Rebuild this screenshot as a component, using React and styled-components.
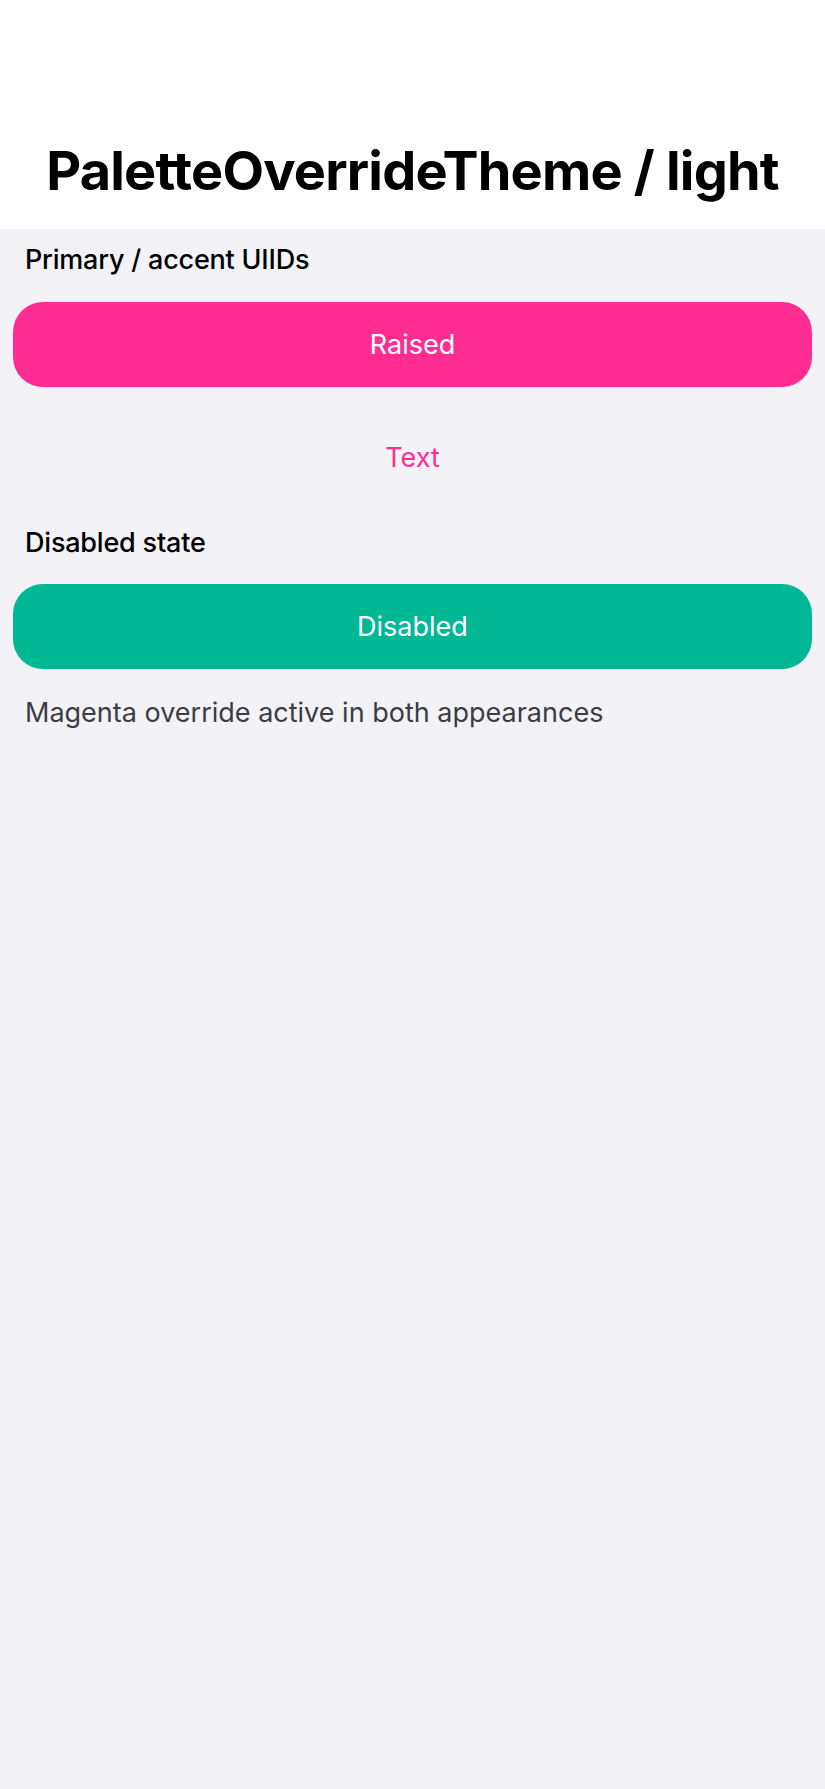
import React from "react";
import styled, { createGlobalStyle } from "styled-components";

const GlobalStyle = createGlobalStyle`
  html, body {
    margin: 0;
    padding: 0;
    background: #f2f2f7;
    font-family: Inter, "Noto Sans", "Liberation Sans", sans-serif;
  }
`;

const Page = styled.div`
  min-height: 1789px;
  background: #f2f2f7;
`;

const Header = styled.header`
  height: 229px;
  background: #ffffff;
  display: flex;
  align-items: flex-end;
  justify-content: center;
  box-sizing: border-box;
  padding-bottom: 26px;
`;

const Title = styled.h1`
  margin: 0;
  font-size: 54px;
  font-weight: 700;
  letter-spacing: -0.8px;
  color: #000;
`;

const Content = styled.main`
  display: flex;
  flex-direction: column;
  padding: 0 13px;
`;

const SectionLabel = styled.div`
  padding: 0 12px;
  font-size: 27px;
  font-weight: 500;
  letter-spacing: -0.2px;
  color: #000;
  line-height: 34px;
  margin-top: ${(p) => p.$top}px;
`;

const Button = styled.button`
  display: flex;
  align-items: center;
  justify-content: center;
  height: ${(p) => p.$h || 85}px;
  margin-top: ${(p) => p.$top}px;
  border: none;
  border-radius: 30px;
  background: ${(p) => p.$bg || "transparent"};
  color: ${(p) => p.$color};
  font-family: inherit;
  font-size: 27px;
  font-weight: 400;
  padding: 0;
`;

const Note = styled.p`
  margin: 27px 0 0;
  padding: 0 12px;
  font-size: 27px;
  line-height: 34px;
  color: #3c3c43;
`;

export default function App() {
  return (
    <Page>
      <GlobalStyle />
      <Header>
        <Title>PaletteOverrideTheme / light</Title>
      </Header>
      <Content>
        <SectionLabel $top={14}>Primary / accent UIIDs</SectionLabel>
        <Button $top={25} $bg="#ff2d92" $color="#ffffff">
          Raised
        </Button>
        <Button $top={0} $h={140} $color="#ff2d92">
          Text
        </Button>
        <SectionLabel $top={-1}>Disabled state</SectionLabel>
        <Button $top={24} $bg="#00b894" $color="#ffffff" disabled>
          Disabled
        </Button>
        <Note>Magenta override active in both appearances</Note>
      </Content>
    </Page>
  );
}
